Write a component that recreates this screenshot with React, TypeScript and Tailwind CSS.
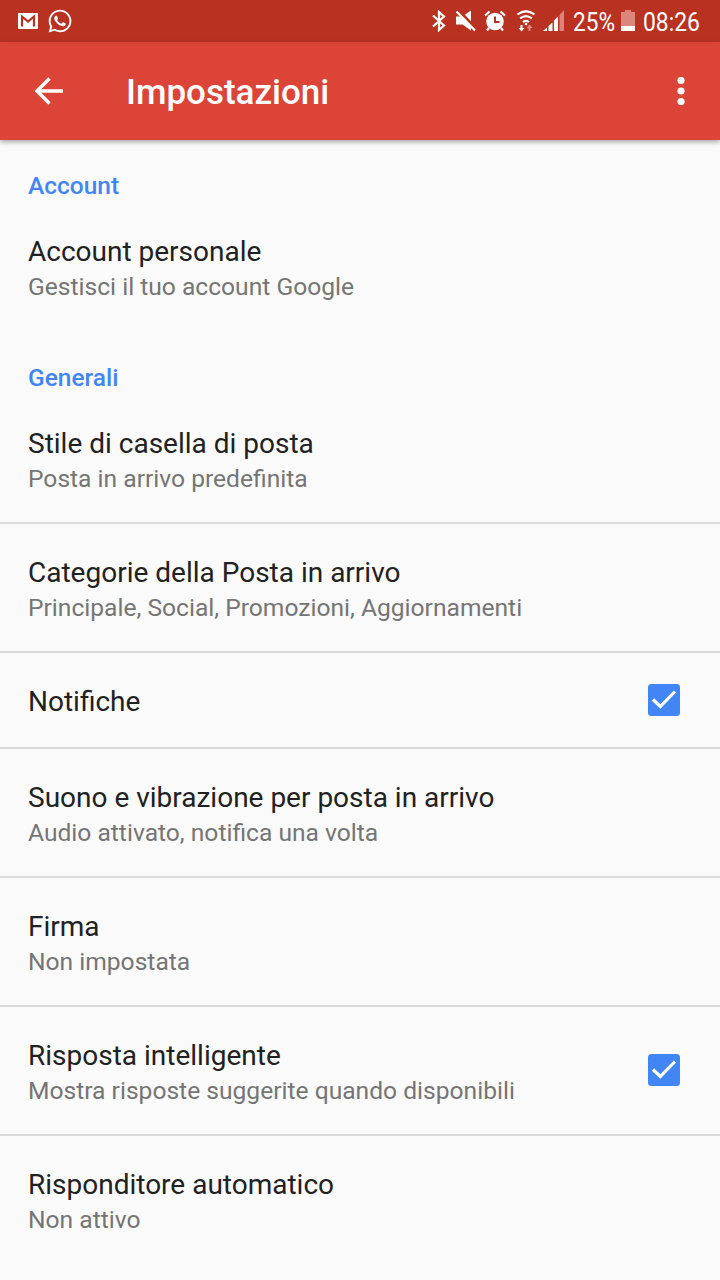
import type { ReactNode } from "react"
import { FaWhatsapp } from "react-icons/fa"

// ---------- Status bar icons ----------

function GmailIcon() {
  return (
    <svg className="h-4 w-5" viewBox="0 0 20 16">
      <rect width="20" height="16" rx="1" fill="#fff" />
      <path d="M4 13.500V3.500l6 5 6-5v10" fill="none" stroke="#b93221" strokeWidth="2.200" />
    </svg>
  )
}

function BluetoothIcon() {
  return (
    <svg className="h-[22px] w-[14px]" viewBox="0 0 14 22" fill="none">
      <path d="M1 5.500l11 10L7 20V2l5 4.500-11 10" stroke="#fff" strokeWidth="2.200" />
    </svg>
  )
}

function MuteIcon() {
  return (
    <svg className="h-[22px] w-5" viewBox="0 0 20 22">
      <path d="M0 6.500h6.500L15 .5v20l-8.500-6H0z" fill="#fff" />
      <path d="M2 -.5l18 19.500" stroke="#b93221" strokeWidth="3" />
      <path d="M.5 1.500l18.500 19" stroke="#fff" strokeWidth="2.200" />
    </svg>
  )
}

function AlarmIcon() {
  return (
    <svg className="h-[22px] w-[22px]" viewBox="0 0 22 22" fill="none">
      <path d="M1 5.500L5.500 1.500M21 5.500l-4.500-4M5 18l-2 2.500M17 18l2 2.500" stroke="#fff" strokeWidth="2.200" />
      <circle cx="11" cy="11.500" r="8.800" fill="#fff" />
      <path d="M11 6.500v5.500h4.500" stroke="#b93221" strokeWidth="2" />
    </svg>
  )
}

function WifiIcon() {
  return (
    <svg className="h-[22px] w-5" viewBox="0 0 20 22" fill="none">
      <path d="M1.500 4.500q8.500-6.500 17 0M4.200 8.300q5.800-4.500 11.600 0M7 12q3-2.300 6 0" stroke="#fff" strokeWidth="2.200" />
      <circle cx="10" cy="14" r="1.300" fill="#fff" />
      <path d="M5.500 15v3.500" stroke="#fff" strokeWidth="2" />
      <path d="M2.500 18h6l-3 3.500z" fill="#fff" />
      <path d="M13.500 21v-3.500" stroke="#e08a80" strokeWidth="2" />
      <path d="M10.500 18h6l-3-3.500z" fill="#e08a80" />
    </svg>
  )
}

function SignalIcon() {
  return (
    <svg className="h-[22px] w-[22px]" viewBox="0 0 22 22">
      <path d="M0 21l4-3.500V21zM5.500 16l4-3.500V21h-4zM11 10.500l4-4V21h-4z" fill="#fff" />
      <path d="M16.500 5L21 0v21h-4.500z" fill="#dc857b" />
    </svg>
  )
}

function BatteryIcon() {
  return (
    <svg className="h-[22px] w-[14px]" viewBox="0 0 14 22">
      <path d="M4 0h6v2h4v14H0V2h4z" fill="#dc857b" />
      <path d="M0 16h14v5H0z" fill="#fff" />
    </svg>
  )
}

function StatusBar() {
  return (
    <div className="flex h-[42px] items-center bg-[#b93221] pr-5 pl-[18px] text-white">
      <GmailIcon />
      <FaWhatsapp className="ml-[9px] size-[26px]" />
      <div className="ml-auto flex items-center">
        <BluetoothIcon />
        <div className="w-2.5" />
        <MuteIcon />
        <div className="w-2" />
        <AlarmIcon />
        <div className="w-2.5" />
        <WifiIcon />
        <div className="w-[7px]" />
        <SignalIcon />
        <span className="ml-2 w-[43px] pt-0.5 text-[26px] leading-[40px]">
          <span className="inline-block origin-left scale-x-[.87]">25%</span>
        </span>
        <div className="w-[5px]" />
        <BatteryIcon />
        <span className="ml-2 w-[57px] pt-0.5 text-[26px] leading-[40px]">
          <span className="inline-block origin-left scale-x-[.88]">08:26</span>
        </span>
      </div>
    </div>
  )
}

// ---------- Toolbar ----------

function Toolbar() {
  return (
    <header className="flex h-[98px] items-center bg-[#db4437] pr-[35px] pl-[34px] text-white shadow-[0_2px_5px_rgba(0,0,0,0.35)]">
      <svg className="h-7 w-[29px]" viewBox="0 0 29 28" fill="none" stroke="#fff" strokeWidth="3.400">
        <path d="M29 14H3M15.500 1.500L3 14l12.500 12.500" />
      </svg>
      <h1 className="ml-[63px] pt-0.5 text-[35px] leading-[41px] font-medium">Impostazioni</h1>
      <svg className="ml-auto h-7 w-2" viewBox="0 0 8 28" fill="#fff">
        <circle cx="4" cy="3.500" r="3.600" />
        <circle cx="4" cy="14" r="3.600" />
        <circle cx="4" cy="24.500" r="3.600" />
      </svg>
    </header>
  )
}

// ---------- List ----------

interface Setting {
  title: string
  summary?: string
  checked?: boolean
}

const general: Setting[] = [
  { title: "Stile di casella di posta", summary: "Posta in arrivo predefinita" },
  { title: "Categorie della Posta in arrivo", summary: "Principale, Social, Promozioni, Aggiornamenti" },
  { title: "Notifiche", checked: true },
  { title: "Suono e vibrazione per posta in arrivo", summary: "Audio attivato, notifica una volta" },
  { title: "Firma", summary: "Non impostata" },
  { title: "Risposta intelligente", summary: "Mostra risposte suggerite quando disponibili", checked: true },
  { title: "Risponditore automatico", summary: "Non attivo" },
]

function Checkbox() {
  return (
    <svg className="mb-px size-8" viewBox="0 0 32 32">
      <rect width="32" height="32" rx="3.500" fill="#4285f4" />
      <path d="M5 15.500l7.300 7L27 7.500" fill="none" stroke="#fff" strokeWidth="3.200" />
    </svg>
  )
}

function SectionTitle({ children }: { children: ReactNode }) {
  return <h2 className="h-[49px] px-7 pt-[14px] text-[24.5px] leading-[35px] font-medium text-[#4285f4]">{children}</h2>
}

function SettingRow({ title, summary, checked }: Setting) {
  return (
    <div className="flex items-center justify-between border-b-2 border-[#dadada] pr-10 pl-7 last:border-b-0">
      <div className={summary ? "pt-[31px] pb-[26px]" : "pt-[31px] pb-7"}>
        <div className="text-[28px] leading-[35px] text-[#212121]">{title}</div>
        {summary && <div className="text-[24.6px] leading-[35px] text-[#757575]">{summary}</div>}
      </div>
      {checked && <Checkbox />}
    </div>
  )
}

export default function App() {
  return (
    <div className="flex h-[1280px] w-[720px] flex-col overflow-hidden bg-[#fafafa] font-[Roboto,sans-serif]">
      <StatusBar />
      <Toolbar />
      <main className="pt-[14px]">
        <section className="h-[192px]">
          <SectionTitle>Account</SectionTitle>
          <SettingRow title="Account personale" summary="Gestisci il tuo account Google" />
        </section>
        <section>
          <SectionTitle>Generali</SectionTitle>
          {general.map((s) => (
            <SettingRow key={s.title} {...s} />
          ))}
        </section>
      </main>
    </div>
  )
}
